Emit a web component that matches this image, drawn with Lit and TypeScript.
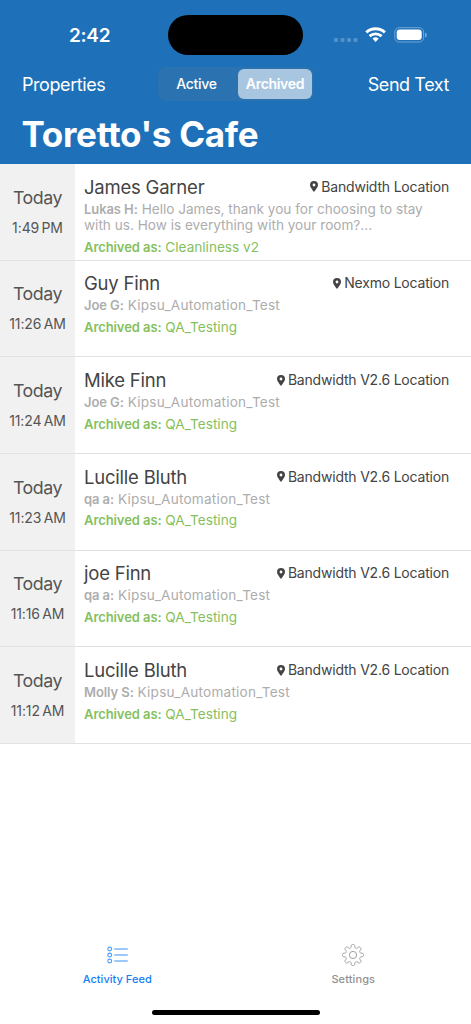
import { LitElement, html, css, svg } from "lit";
import { customElement, property } from "lit/decorators.js";
import { classMap } from "lit/directives/class-map.js";

interface Thread {
  name: string;
  time: string;
  from: string;
  text: string;
  tag: string;
  place: string;
}

const THREADS: Thread[] = [
  { name: "James Garner", time: "1:49 PM", from: "Lukas H:", text: "Hello James, thank you for choosing to stay with us. How is everything with your room?...", tag: "Cleanliness v2", place: "Bandwidth Location" },
  { name: "Guy Finn", time: "11:26 AM", from: "Joe G:", text: "Kipsu_Automation_Test", tag: "QA_Testing", place: "Nexmo Location" },
  { name: "Mike Finn", time: "11:24 AM", from: "Joe G:", text: "Kipsu_Automation_Test", tag: "QA_Testing", place: "Bandwidth V2.6 Location" },
  { name: "Lucille Bluth", time: "11:23 AM", from: "qa a:", text: "Kipsu_Automation_Test", tag: "QA_Testing", place: "Bandwidth V2.6 Location" },
  { name: "joe Finn", time: "11:16 AM", from: "qa a:", text: "Kipsu_Automation_Test", tag: "QA_Testing", place: "Bandwidth V2.6 Location" },
  { name: "Lucille Bluth", time: "11:12 AM", from: "Molly S:", text: "Kipsu_Automation_Test", tag: "QA_Testing", place: "Bandwidth V2.6 Location" },
];

@customElement("thread-row")
export class ThreadRow extends LitElement {
  @property({ attribute: false }) thread!: Thread;

  static styles = css`
    :host {
      display: grid;
      grid-template-columns: 75px 1fr;
      height: 96.67px;
      box-sizing: border-box;
      border-bottom: 1px solid #e2e2e2;
      color: #444;
      white-space: nowrap;
    }
    .when {
      background: #f1f1f1;
      text-align: center;
      color: #555;
      padding-top: 21.6px;
    }
    .day { font-size: 17.8px; line-height: 24px; letter-spacing: -0.45px; }
    .time { font-size: 14px; line-height: 18px; margin-top: 9px; letter-spacing: -0.1px; word-spacing: -1.5px; }
    .body { padding: 10.8px 22px 0 9px; }
    .top { display: flex; justify-content: space-between; height: 24px; line-height: 24px; }
    .name { font-size: 18.5px; letter-spacing: -0.22px; }
    .place { font-size: 14px; letter-spacing: -0.2px; display: flex; align-items: center; }
    .pin { width: 8px; height: 11px; margin-right: 3px; }
    .msg { font-size: 13.6px; line-height: 16.5px; color: #adadad; white-space: normal; width: 350px; margin-top: 1.8px; }
    .token { letter-spacing: 0.21px; }
    .tag { font-size: 13.6px; line-height: 17px; color: #85bf60; margin-top: 5.3px; }
    b { font-weight: 600; font-size: 13px; letter-spacing: -0.08px; }
  `;

  render() {
    const t = this.thread;
    return html`
      <div class="when">
        <div class="day">Today</div>
        <div class="time">${t.time}</div>
      </div>
      <div class="body">
        <div class="top">
          <span class="name">${t.name}</span>
          <span class="place">
            <svg class="pin" viewBox="0 0 8 11"><path fill="#444" fill-rule="evenodd" d="M4 0a4 4 0 0 1 4 4c0 2.100-2.200 4.500-4 7-1.800-2.500-4-4.900-4-7a4 4 0 0 1 4-4zm0 2.600a1.400 1.400 0 1 0 0 2.800 1.400 1.400 0 0 0 0-2.800z"/></svg>
            <span class="where">${t.place}</span>
          </span>
        </div>
        <div class="msg"><b>${t.from}</b> <span class=${classMap({ token: t.text.includes("_") })}>${t.text}</span></div>
        <div class="tag"><b>Archived as:</b> ${t.tag}</div>
      </div>
    `;
  }
}

/** Outline of an eight-toothed gear centred on the origin. */
function gearPath(): string {
  const pts: string[] = [];
  for (let i = 0; i <= 160; i++) {
    const a = (i / 160) * Math.PI * 2;
    const r = 9 + 1.55 * Math.tanh(2.2 * Math.cos(8 * a));
    pts.push(`${(r * Math.sin(a)).toFixed(2)} ${(-r * Math.cos(a)).toFixed(2)}`);
  }
  return `M${pts.join("L")}Z`;
}

@customElement("app-root")
export class AppRoot extends LitElement {
  static styles = css`
    :host {
      display: flex;
      flex-direction: column;
      height: 1024px;
      width: 471px;
      overflow: hidden;
      background: #fff;
      font-family: Inter, "Liberation Sans", sans-serif;
      white-space: nowrap;
    }
    header { height: 164px; background: #1e71b9; color: #fff; flex: none; }
    .status { height: 55px; padding-top: 15px; box-sizing: border-box; display: grid; grid-template-columns: 168px 135px 1fr; }
    .clock { font-size: 19px; font-weight: 600; line-height: 41px; padding-left: 69px; letter-spacing: -0.3px; }
    .island { height: 39.500px; background: #000; border-radius: 20px; }
    .signals { display: block; width: 100px; height: 20px; margin: 10px 0 0 29px; }
    .nav { height: 58px; display: grid; grid-template-columns: 158px 156px 1fr; align-items: center; font-size: 18px; letter-spacing: -0.43px; padding: 0 22px 0 0; }
    .left { padding-left: 22px; }
    .right { text-align: right; }
    .segments { display: grid; grid-template-columns: 1fr 1fr; height: 34px; padding: 2px; box-sizing: border-box; background: #2b72b0; border-radius: 8px; font-size: 14px; line-height: 30px; text-align: center; }
    .active { font-weight: 500; letter-spacing: -0.3px; padding-right: 3px; }
    .archived { font-weight: 600; letter-spacing: -0.3px; background: #a9c6e1; border-radius: 6px; width: 74px; margin-left: 2px; height: 30px; }
    h1 { margin: 0; padding-left: 21.500px; font-size: 35px; line-height: 42px; font-weight: 700; letter-spacing: -0.3px; }
    .list { flex: 1; }
    .tabs { display: grid; grid-template-columns: 1fr 1fr; height: 67px; text-align: center; font-size: 11px; font-weight: 500; color: #929292; }
    .tab svg { display: block; margin: 0 auto; }
    .tab.on { color: #1480f5; }
    .label { line-height: 14px; margin-top: 5px; letter-spacing: 0.1px; }
    .tab.on .label { letter-spacing: 0.03px; padding-right: 1px; }
    .home { width: 168px; height: 5px; border-radius: 3px; background: #000; margin: 0 auto 9px; flex: none; }
  `;

  render() {
    return html`
      <header>
        <div class="status">
          <span class="clock">2:42</span>
          <div class="island"></div>
          <svg class="signals" viewBox="0 0 100 20">
            <g fill="#5391ca">
              ${[2, 8.5, 15, 21.5].map((x) => svg`<rect x=${x} y="13" width="4" height="4" rx="1.200"/>`)}
            </g>
            <g fill="none" stroke="#fff" stroke-width="2.900">
              <path d="M34.300 7.300a14 14 0 0 1 18.600 0"/>
              <path d="M37.600 11.200a9 9 0 0 1 12 0"/>
            </g>
            <path fill="#fff" d="M40.500 13.600a4.700 4.700 0 0 1 6.200 0L43.600 16.900z"/>
            <rect x="62.800" y="2.700" width="28.800" height="14.300" rx="4.300" fill="none" stroke="#6fa4d5"/>
            <rect x="64.700" y="4.600" width="25" height="10.500" rx="3" fill="#fff"/>
            <path fill="#6fa4d5" d="M93 7.500q2 .5 2 2.500t-2 2.500z"/>
          </svg>
        </div>
        <div class="nav">
          <span class="left">Properties</span>
          <div class="segments"><span class="active">Active</span><span class="archived">Archived</span></div>
          <span class="right">Send Text</span>
        </div>
        <h1>Toretto's Cafe</h1>
      </header>
      <main class="list">
        ${THREADS.map((t) => html`<thread-row .thread=${t}></thread-row>`)}
      </main>
      <nav class="tabs">
        <div class="tab on">
          <svg width="24" height="24" viewBox="0.500 0 24 24" fill="none" stroke="#4a9df8" stroke-width="1.100">
            ${[6, 12, 18].map((y) => svg`<circle cx="4.200" cy=${y} r="1.900"/><path d="M8.700 ${y}h13.600"/>`)}
          </svg>
          <div class="label">Activity Feed</div>
        </div>
        <div class="tab">
          <svg width="24" height="24" viewBox="-12 -12 24 24" fill="none" stroke="#a0a0a0" stroke-width="1">
            <path d=${gearPath()}/><circle r="3.600"/>
          </svg>
          <div class="label">Settings</div>
        </div>
      </nav>
      <div class="home"></div>
    `;
  }
}
